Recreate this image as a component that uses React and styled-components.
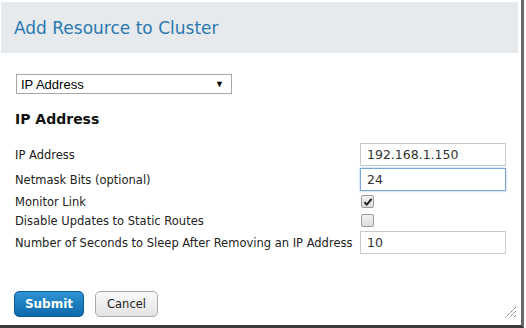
import React from "react";
import styled, { createGlobalStyle } from "styled-components";

const GlobalStyle = createGlobalStyle`
  html, body {
    margin: 0;
    padding: 0;
    background: #fff;
  }
  body {
    font-family: "DejaVu Sans", "Liberation Sans", sans-serif;
    color: #222;
  }
`;

const fields = [
  { label: "IP Address", type: "text", value: "192.168.1.150" },
  { label: "Netmask Bits (optional)", type: "text", value: "24", focused: true },
  { label: "Monitor Link", type: "checkbox", checked: true },
  { label: "Disable Updates to Static Routes", type: "checkbox", checked: false },
  { label: "Number of Seconds to Sleep After Removing an IP Address", type: "text", value: "10" },
];

const App = () => {
  return (
    <>
      <GlobalStyle />
      <Dialog>
        <Header>
          <Title>Add Resource to Cluster</Title>
        </Header>
        <Body>
          <Select>
            <span>IP Address</span>
            <Arrow>▼</Arrow>
          </Select>
          <SectionTitle>IP Address</SectionTitle>
          <Form>
            {fields.map((f) => (
              <React.Fragment key={f.label}>
                <Label>{f.label}</Label>
                <Control>
                  {f.type === "text" ? (
                    <TextInput focused={f.focused}>{f.value}</TextInput>
                  ) : (
                    <Checkbox>
                      {f.checked && (
                        <svg width="10" height="10" viewBox="0 0 10 10">
                          <path
                            d="M1.5 5.2 L3.8 7.6 L8.6 1.8"
                            fill="none"
                            stroke="#222"
                            strokeWidth="2"
                          />
                        </svg>
                      )}
                    </Checkbox>
                  )}
                </Control>
              </React.Fragment>
            ))}
          </Form>
          <Actions>
            <SubmitButton>Submit</SubmitButton>
            <CancelButton>Cancel</CancelButton>
          </Actions>
        </Body>
        <Grip width="14" height="14" viewBox="0 0 14 14">
          <path
            d="M13 2 L2 13 M13 6 L6 13 M13 10 L10 13"
            stroke="#444"
            strokeWidth="1"
            strokeDasharray="1 1"
          />
        </Grip>
      </Dialog>
    </>
  );
};

const Dialog = styled.div`
  position: relative;
  box-sizing: border-box;
  width: 524px;
  height: 328px;
  padding: 2px 0 0 1px;
  border-right: 3px solid #666;
  border-bottom: 3px solid #3a3a3a;
  display: flex;
  flex-direction: column;
`;

const Header = styled.div`
  height: 51px;
  margin-right: 3px;
  background: #e6eaed;
  display: flex;
  align-items: center;
  padding-left: 13px;
`;

const Title = styled.h1`
  margin: 0;
  font-size: 17px;
  font-weight: normal;
  color: #2b78b0;
`;

const Body = styled.div`
  padding: 21px 0 0 14px;
  display: flex;
  flex-direction: column;
`;

const Select = styled.div`
  box-sizing: border-box;
  width: 216px;
  height: 20px;
  margin-left: 1px;
  border: 1px solid #a6a6a6;
  display: flex;
  align-items: center;
  justify-content: space-between;
  padding: 0 4px 0 4px;
  font-family: "Liberation Sans", Arial, sans-serif;
  font-size: 13px;
  color: #000;
`;

const Arrow = styled.span`
  font-size: 9px;
  margin-right: 3px;
`;

const SectionTitle = styled.h2`
  margin: 17px 0 0 0;
  font-size: 14px;
  line-height: 17px;
  font-weight: bold;
  color: #111;
`;

const Form = styled.div`
  margin-top: 15px;
  display: grid;
  grid-template-columns: 345px 146px;
  grid-template-rows: 23px 23px 17px 17px 23px;
  row-gap: 2px;
  align-items: center;
`;

const Label = styled.div`
  font-size: 11.5px;
  color: #222;
  white-space: nowrap;
`;

const Control = styled.div`
  display: flex;
  align-items: center;
  height: 100%;
`;

const TextInput = styled.div`
  box-sizing: border-box;
  width: 146px;
  height: 23px;
  border: 1px solid ${({ focused }) => (focused ? "#7aa7d6" : "#c9c9c9")};
  box-shadow: ${({ focused }) => (focused ? "0 0 2px rgba(80,140,210,0.6)" : "none")};
  display: flex;
  align-items: center;
  padding-left: 6px;
  font-size: 12.5px;
  color: #333;
`;

const Checkbox = styled.div`
  box-sizing: border-box;
  width: 13px;
  height: 13px;
  margin-left: 1px;
  border: 1px solid #9a9a9a;
  border-radius: 2px;
  background: linear-gradient(#f2f2f2, #dcdcdc);
  display: flex;
  align-items: center;
  justify-content: center;
`;

const Actions = styled.div`
  margin-top: 37px;
  display: flex;
  gap: 11px;
  margin-left: -1px;
`;

const SubmitButton = styled.button`
  box-sizing: border-box;
  width: 70px;
  height: 26px;
  border: 1px solid #0b5d96;
  border-radius: 5px;
  background: linear-gradient(#2f93d4, #0a69ab);
  color: #fff;
  font-family: "DejaVu Sans", sans-serif;
  font-weight: bold;
  font-size: 12px;
  padding: 0;
`;

const CancelButton = styled.button`
  box-sizing: border-box;
  width: 63px;
  height: 26px;
  border: 1px solid #a9a9a9;
  border-radius: 5px;
  background: linear-gradient(#fafafa, #e3e3e3);
  color: #222;
  font-family: "DejaVu Sans", sans-serif;
  font-size: 11.5px;
  padding: 0;
`;

const Grip = styled.svg`
  position: absolute;
  right: 4px;
  bottom: 6px;
`;

export default App;
